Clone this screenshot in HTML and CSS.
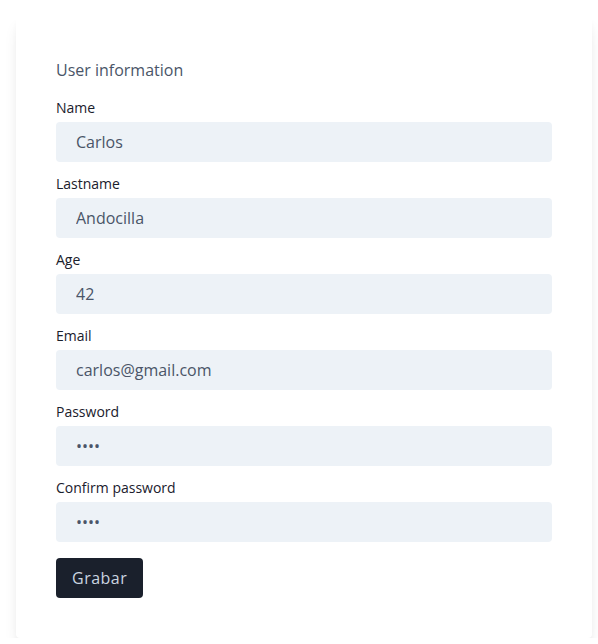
FILE: index.html
```html
<!DOCTYPE html>
<html lang="en">
<head>
<meta charset="utf-8">
<link rel="stylesheet" href="styles.css">
</head>
<body>
<form class="card">
  <h2 class="title">User information</h2>
  <div class="field">
    <label class="label">Name</label>
    <input class="input" type="text" value="Carlos">
  </div>
  <div class="field">
    <label class="label">Lastname</label>
    <input class="input" type="text" value="Andocilla">
  </div>
  <div class="field">
    <label class="label">Age</label>
    <input class="input" type="text" value="42">
  </div>
  <div class="field">
    <label class="label">Email</label>
    <input class="input" type="text" value="carlos@gmail.com">
  </div>
  <div class="field">
    <label class="label">Password</label>
    <input class="input" type="password" value="1234">
  </div>
  <div class="field">
    <label class="label">Confirm password</label>
    <input class="input" type="password" value="1234">
  </div>
  <button class="button" type="button">Grabar</button>
</form>
</body>
</html>
```

FILE: styles.css
```css
* { box-sizing: border-box; }
html, body { margin: 0; padding: 0; background: #fff; }
body {
  font-family: "Open Sans", "Noto Sans", sans-serif;
  padding: 16px 0 0 16px;
}
.card {
  width: 576px;
  background: #fff;
  border-radius: 4px;
  box-shadow: 0 10px 15px -3px rgba(0,0,0,0.1), 0 4px 6px -2px rgba(0,0,0,0.05);
  padding: 42px 40px 40px 40px;
  display: flex;
  flex-direction: column;
  align-items: flex-start;
}
.title {
  margin: 0 0 16px 0;
  font-size: 16px;
  line-height: 24px;
  font-weight: 400;
  color: #4a5568;
}
.field {
  width: 100%;
  display: flex;
  flex-direction: column;
  gap: 4px;
  margin-bottom: 12px;
}
.label {
  font-size: 14px;
  line-height: 20px;
  color: #1a202c;
}
.input {
  width: 100%;
  height: 40px;
  border: none;
  border-radius: 4px;
  background: #edf2f7;
  padding: 0 20px;
  font-family: inherit;
  font-size: 16px;
  color: #4a5568;
  outline: none;
}
.button {
  margin-top: 4px;
  height: 40px;
  padding: 0 16px;
  border: none;
  border-radius: 4px;
  background: #1a202c;
  color: #cbd5e0;
  font-family: inherit;
  font-size: 16px;
  letter-spacing: 0.5px;
}
```
